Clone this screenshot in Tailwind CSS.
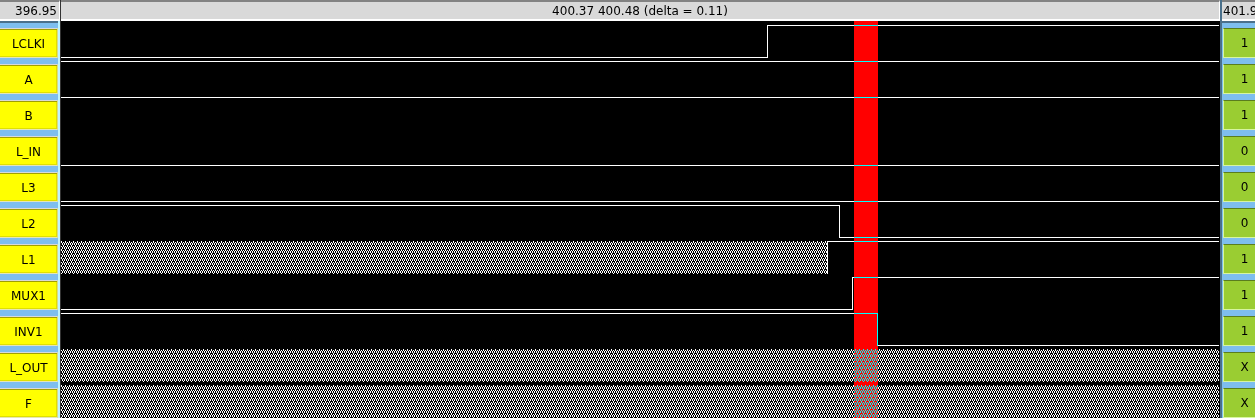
<!DOCTYPE html>
<html lang="en">
<head>
<meta charset="utf-8">
<title>Waveform viewer</title>
<script src="https://cdn.jsdelivr.net/npm/@tailwindcss/browser@4"></script>
</head>
<body class="h-screen overflow-hidden bg-black text-xs text-black font-['DejaVu_Sans',sans-serif]">
<main class="flex h-full w-full overflow-hidden">
  <aside class="flex w-[60px] shrink-0 flex-col border-r-2 border-[#bff4ff] bg-[#7ebeee]">
    <header class="-mr-0.5 h-[21px] shrink-0 border-t-2 border-r border-b-2 border-t-[#828282] border-r-white border-b-white bg-[#d9d9d9] pr-0.5 text-right leading-[18px]">396.95</header>
    <div class="h-0.5 shrink-0 bg-[#4a708b]"></div>
    <div id="names" class="flex flex-col gap-1.5 pt-[5px]"></div>
  </aside>
  <section class="flex min-w-0 flex-1 flex-col border-l border-[#333]">
    <header class="h-[21px] shrink-0 border-t-2 border-r border-b-2 border-t-[#828282] border-r-white border-b-white bg-[#d9d9d9] text-center leading-[18px]">400.37 400.48 (delta = 0.11)</header>
    <div class="relative mr-px flex-1 overflow-hidden bg-black">
      <svg class="block h-[397px] w-full" shape-rendering="crispEdges" fill="none" stroke="#fff" aria-label="Signal traces">
        <defs>
          <pattern id="unknown" width="4" height="8" patternUnits="userSpaceOnUse" patternTransform="translate(0 4)">
            <path stroke="none" fill="#fff" d="M0 0h1v2h-1z M2 1h1v1h-1z M1 2h1v2h-1z M3 2h1v2h-1z M2 4h1v2h-1z M0 5h1v1h-1z M1 6h1v2h-1z M3 6h1v2h-1z"/>
          </pattern>
        </defs>
        <path d="M0 36.5H706.5V4.5H4000"/>
        <path d="M0 40.5H4000"/>
        <path d="M0 76.5H4000"/>
        <path d="M0 144.5H4000"/>
        <path d="M0 180.5H4000"/>
        <path d="M0 184.5H778.5V216.5H4000"/>
        <rect width="766" height="33" y="220" fill="url(#unknown)" stroke="none"/>
        <path d="M766.5 253V220.5H4000"/>
        <path d="M0 288.5H791.5V256.5H4000"/>
        <path d="M0 292.5H816.5V324.5H4000"/>
        <rect width="100%" height="33" y="328" fill="url(#unknown)" stroke="none"/>
        <rect width="100%" height="33" y="364" fill="url(#unknown)" stroke="none"/>
      </svg>
      <div class="absolute top-0 bottom-0 left-[793px] w-6 bg-[#f00] mix-blend-difference"></div>
    </div>
  </section>
  <aside class="flex w-[35px] shrink-0 flex-col overflow-hidden border-l-2 border-[#4a708b] bg-[#7ebeee]">
    <header class="-ml-px h-[21px] shrink-0 overflow-hidden border-t-2 border-b-2 border-l border-t-[#828282] border-l-white border-b-white bg-[#d9d9d9] pl-px leading-[18px] whitespace-nowrap">401.95</header>
    <div class="h-0.5 shrink-0 bg-[#4a708b]"></div>
    <div id="values" class="flex flex-col gap-1.5 pt-[5px] pl-px"></div>
  </aside>
</main>
<script>
const signals = [['LCLKI','1'],['A','1'],['B','1'],['L_IN','0'],['L3','0'],['L2','0'],['L1','1'],['MUX1','1'],['INV1','1'],['L_OUT','X'],['F','X']];
for (const [name, value] of signals) {
  const b = document.createElement('button');
  b.className = 'h-[30px] w-full shrink-0 border-t border-r border-b border-t-[#d9d9d9] border-r-[#d9d98a] border-b-[#e6e6b4] bg-[#ff0] pt-0.5 shadow-[inset_0_1px_0_#a0a000,inset_-1px_-1px_0_#e0e000]';
  b.textContent = name;
  document.getElementById('names').append(b);
  const v = document.createElement('div');
  v.className = 'h-[30px] w-[42px] shrink-0 border-t border-b border-l border-t-[#5a7d1e] border-b-[#d7f5a0] border-l-[#d7f5a0] bg-[#9acd32] text-center leading-7';
  v.textContent = value;
  document.getElementById('values').append(v);
}
</script>
</body>
</html>
